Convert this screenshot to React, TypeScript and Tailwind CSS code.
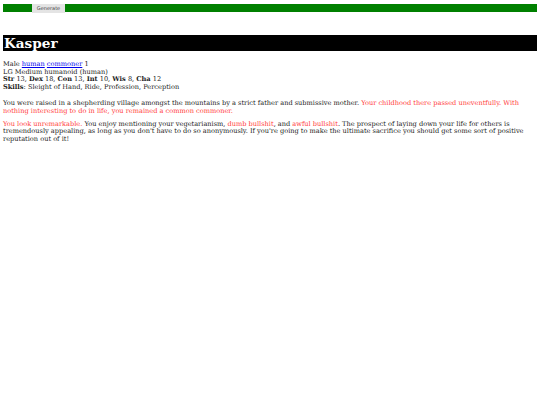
import React from "react";

const Red = ({ children }: { children: React.ReactNode }) => (
  <span className="text-[#ff3b3b]">{children}</span>
);

export default function App() {
  return (
    <div className="min-h-screen bg-white px-[3px] pt-[4px] font-[DejaVu_Serif,serif] text-[6.6px] leading-[7.5px] text-[#222]">
      <div className="flex h-[8px] items-center bg-[#008000] pl-[29px]">
        <button className="h-[9px] w-[33px] bg-[#e4e4e4] font-[DejaVu_Sans,sans-serif] text-[5px] leading-[9px] text-[#444]">
          Generate
        </button>
      </div>

      <h1 className="mt-[23px] h-[16px] bg-black px-[1px] text-[13.6px] font-bold leading-[16px] text-white">Kasper</h1>

      <div className="mt-[10px]">
        <div>
          Male <a className="text-[#0000ee] underline">human</a> <a className="text-[#0000ee] underline">commoner</a> 1
        </div>
        <div>LG Medium humanoid (human)</div>
        <div>
          <b>Str</b> 13, <b>Dex</b> 18, <b>Con</b> 13, <b>Int</b> 10, <b>Wis</b> 8, <b>Cha</b> 12
        </div>
        <div>
          <b>Skills</b>: Sleight of Hand, Ride, Profession, Perception
        </div>
      </div>

      <p className="mt-[9px]">
        You were raised in a shepherding village amongst the mountains by a strict father and submissive mother.{" "}
        <Red>Your childhood there passed uneventfully. With nothing interesting to do in life, you remained a common commoner.</Red>
      </p>

      <p className="mt-[5.5px]">
        <Red>You look unremarkable.</Red> You enjoy mentioning your vegetarianism, <Red>dumb bullshit</Red>, and{" "}
        <Red>awful bullshit</Red>. The prospect of laying down your life for others is tremendously appealing, as long as
        you don't have to do so anonymously. If you're going to make the ultimate sacrifice you should get some sort of
        positive reputation out of it!
      </p>
    </div>
  );
}
